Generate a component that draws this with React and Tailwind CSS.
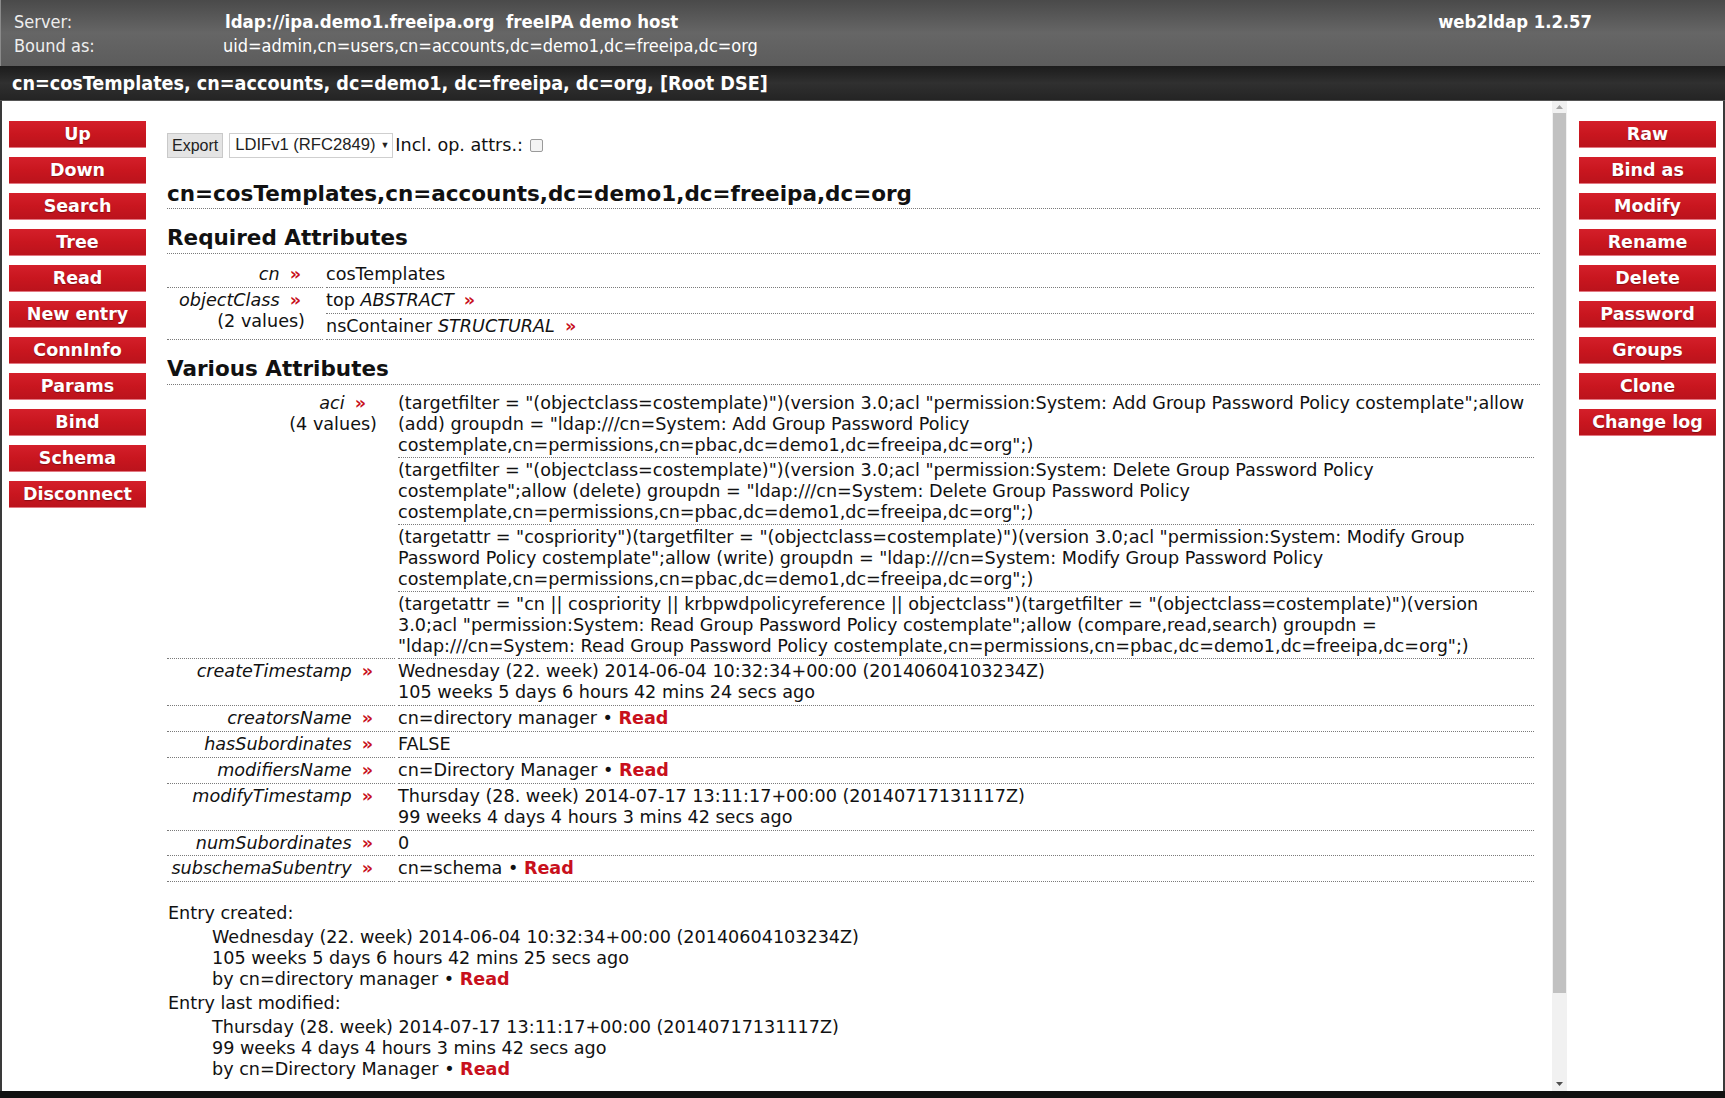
import React from "react";

const body = { fontFamily: '"DejaVu Sans", Verdana, sans-serif' };
const cond = { fontFamily: '"DejaVu Sans Condensed", "DejaVu Sans", sans-serif' };
const arial = { fontFamily: '"Liberation Sans", Arial, sans-serif' };

const leftNav = ["Up", "Down", "Search", "Tree", "Read", "New entry", "ConnInfo", "Params", "Bind", "Schema", "Disconnect"];
const rightNav = ["Raw", "Bind as", "Modify", "Rename", "Delete", "Password", "Groups", "Clone", "Change log"];

function NavButton({ label }) {
  return (
    <a className="block h-[27px] w-[137px] border-b border-[#e27882] bg-gradient-to-b from-[#d41f2a] via-[#c9161f] to-[#bb131c] text-center text-[17.5px] font-bold leading-[26px] text-white [text-shadow:0_1px_1px_rgba(0,0,0,0.3)]">
      {label}
    </a>
  );
}

function Arrow({ wide }) {
  return <span className={"ml-[10px] font-bold text-[#c8101c] " + (wide ? "mr-[11px]" : "mr-[4px]")}>»</span>;
}

function ValArrow() {
  return <span className="ml-[10px] font-bold text-[#c8101c]">»</span>;
}

function ReadLink() {
  return <span className="font-bold text-[#c8101c]">Read</span>;
}

const cellL = "border-b border-dotted border-[#7a7a7a] bg-white text-right align-top py-[2px] pr-[18px]";
const cellV = "border-b border-dotted border-[#7a7a7a] bg-white align-top py-[2px]";
const cellA = "border-b border-dotted border-[#7a7a7a] bg-white align-top pt-[2px] pb-[1.4px]";

const aciValues = [
  [
    '(targetfilter = "(objectclass=costemplate)")(version 3.0;acl "permission:System: Add Group Password Policy costemplate";allow',
    '(add) groupdn = "ldap:///cn=System: Add Group Password Policy',
    'costemplate,cn=permissions,cn=pbac,dc=demo1,dc=freeipa,dc=org";)',
  ],
  [
    '(targetfilter = "(objectclass=costemplate)")(version 3.0;acl "permission:System: Delete Group Password Policy',
    'costemplate";allow (delete) groupdn = "ldap:///cn=System: Delete Group Password Policy',
    'costemplate,cn=permissions,cn=pbac,dc=demo1,dc=freeipa,dc=org";)',
  ],
  [
    '(targetattr = "cospriority")(targetfilter = "(objectclass=costemplate)")(version 3.0;acl "permission:System: Modify Group',
    'Password Policy costemplate";allow (write) groupdn = "ldap:///cn=System: Modify Group Password Policy',
    'costemplate,cn=permissions,cn=pbac,dc=demo1,dc=freeipa,dc=org";)',
  ],
  [
    '(targetattr = "cn || cospriority || krbpwdpolicyreference || objectclass")(targetfilter = "(objectclass=costemplate)")(version',
    '3.0;acl "permission:System: Read Group Password Policy costemplate";allow (compare,read,search) groupdn =',
    '"ldap:///cn=System: Read Group Password Policy costemplate,cn=permissions,cn=pbac,dc=demo1,dc=freeipa,dc=org";)',
  ],
];

const various = [
  ["createTimestamp", ["Wednesday (22. week) 2014-06-04 10:32:34+00:00 (20140604103234Z)", "105 weeks 5 days 6 hours 42 mins 24 secs ago"]],
  ["creatorsName", [<>cn=directory manager • <ReadLink /></>]],
  ["hasSubordinates", ["FALSE"]],
  ["modifiersName", [<>cn=Directory Manager • <ReadLink /></>]],
  ["modifyTimestamp", ["Thursday (28. week) 2014-07-17 13:11:17+00:00 (20140717131117Z)", "99 weeks 4 days 4 hours 3 mins 42 secs ago"]],
  ["numSubordinates", ["0"]],
  ["subschemaSubentry", [<>cn=schema • <ReadLink /></>]],
];

export default function App() {
  return (
    <div className="flex h-[1098px] w-[1725px] flex-col overflow-hidden bg-white text-[17.6px] leading-[20.9px] text-[#111]" style={body}>
      {/* top header */}
      <div className="flex h-[66px] shrink-0 items-start justify-between border-l border-[#8a8a8a] bg-gradient-to-b from-[#4a4a4a] via-[#666] to-[#5c5c5c] text-white" style={cond}>
        <div className="grid grid-cols-[209px_auto] content-start pl-[13px] pt-[10px] text-[18px] leading-[24px]">
          <div className="text-[#eee]">Server:</div>
          <div className="pl-[2px] text-[18.5px] font-bold">ldap://ipa.demo1.freeipa.org&nbsp; freeIPA demo host</div>
          <div className="text-[#eee]">Bound as:</div>
          <div>uid=admin,cn=users,cn=accounts,dc=demo1,dc=freeipa,dc=org</div>
        </div>
        <div className="pr-[133px] pt-[10px] text-[18.3px] font-bold leading-[24px]">web2ldap 1.2.57</div>
      </div>
      {/* dn bar */}
      <div className="flex h-[35px] shrink-0 items-center border-b border-[#555] bg-gradient-to-b from-[#1c1c1c] via-[#303030] to-[#242424] pl-[12px] pt-[2px] text-[19.6px] font-bold text-white" style={cond}>
        cn=cosTemplates, cn=accounts, dc=demo1, dc=freeipa, dc=org, [Root DSE]
      </div>
      {/* body */}
      <div className="flex min-h-0 flex-1 border-x-2 border-[#3a3a3a]">
        <div className="flex w-[146px] shrink-0 flex-col gap-[9px] pl-[7px] pt-[20px]">
          {leftNav.map((l) => (
            <NavButton key={l} label={l} />
          ))}
        </div>
        <div className="min-w-0 flex-1 overflow-hidden pl-[19px] pr-[12px] pt-[32px]">
          <div className="flex items-center">
            <button className="h-[25px] border border-[#c9c9c9] bg-[#e4e4e4] px-[4px] text-[16px] leading-[23px] text-[#222]" style={arial}>
              Export
            </button>
            <div className="ml-[6px] flex h-[25px] items-center border border-[#cfcfcf] bg-white pl-[5px] pr-[3px] text-[16.6px] text-[#222]" style={arial}>
              LDIFv1 (RFC2849)<span className="ml-[5px] text-[9px]">▼</span>
            </div>
            <span className="ml-[2px]">Incl. op. attrs.:</span>
            <span className="ml-[7px] inline-block h-[13px] w-[13px] rounded-[2px] border border-[#9a9a9a] bg-[#f3f3f3]"></span>
          </div>

          <h1 className="mt-[23px] border-b border-dotted border-[#7a7a7a] pb-[2px] text-[21.5px] font-bold leading-[25px]">
            cn=cosTemplates,cn=accounts,dc=demo1,dc=freeipa,dc=org
          </h1>

          <h2 className="mt-[16px] border-b border-dotted border-[#7a7a7a] pb-[3px] text-[21.5px] font-bold leading-[25px]">
            Required Attributes
          </h2>
          <table className="mt-[8px] w-full border-separate border-spacing-x-[3px] border-spacing-y-0 -mx-[3px]">
            <tbody>
              <tr>
                <td className={cellL + " w-[156px]"}>
                  <i>cn</i>
                  <Arrow />
                </td>
                <td className={cellV}>cosTemplates</td>
              </tr>
              <tr>
                <td className={cellL} rowSpan={2}>
                  <i>objectClass</i>
                  <Arrow />
                  <div>(2 values)</div>
                </td>
                <td className={cellV}>
                  top <i>ABSTRACT</i>
                  <ValArrow />
                </td>
              </tr>
              <tr>
                <td className={cellV}>
                  nsContainer <i>STRUCTURAL</i>
                  <ValArrow />
                </td>
              </tr>
            </tbody>
          </table>

          <h2 className="mt-[16px] border-b border-dotted border-[#7a7a7a] pb-[3px] text-[21.5px] font-bold leading-[25px]">
            Various Attributes
          </h2>
          <table className="mt-[6px] w-full border-separate border-spacing-x-[3px] border-spacing-y-0 -mx-[3px]">
            <tbody>
              {aciValues.map((v, i) => (
                <tr key={i}>
                  {i === 0 && (
                    <td className={cellL + " w-[228px]"} rowSpan={4}>
                      <i>aci</i>
                      <Arrow wide />
                      <div>(4 values)</div>
                    </td>
                  )}
                  <td className={cellA}>
                    {v.map((line, j) => (
                      <div key={j} className="whitespace-nowrap">
                        {line}
                      </div>
                    ))}
                  </td>
                </tr>
              ))}
              {various.map(([name, lines]) => (
                <tr key={name}>
                  <td className={cellL}>
                    <i>{name}</i>
                    <Arrow />
                  </td>
                  <td className={cellV}>
                    {lines.map((line, j) => (
                      <div key={j}>{line}</div>
                    ))}
                  </td>
                </tr>
              ))}
            </tbody>
          </table>

          <div className="mt-[21px] pl-[1px]">
            <div>Entry created:</div>
            <div className="my-[3px] pl-[44px]">
              <div>Wednesday (22. week) 2014-06-04 10:32:34+00:00 (20140604103234Z)</div>
              <div>105 weeks 5 days 6 hours 42 mins 25 secs ago</div>
              <div>
                by cn=directory manager • <ReadLink />
              </div>
            </div>
            <div>Entry last modified:</div>
            <div className="my-[3px] pl-[44px]">
              <div>Thursday (28. week) 2014-07-17 13:11:17+00:00 (20140717131117Z)</div>
              <div>99 weeks 4 days 4 hours 3 mins 42 secs ago</div>
              <div>
                by cn=Directory Manager • <ReadLink />
              </div>
            </div>
          </div>
        </div>
        {/* scrollbar */}
        <div className="flex w-[15px] shrink-0 flex-col items-center bg-[#f1f1f1]">
          <div className="flex h-[12px] w-full items-center justify-center">
            <svg width="7" height="4" viewBox="0 0 7 4"><path d="M3.5 0L7 4H0z" fill="#a3a3a3" /></svg>
          </div>
          <div className="h-[880px] w-[13px] bg-[#c1c1c1]"></div>
          <div className="flex-1"></div>
          <div className="flex h-[14px] w-full items-center justify-center">
            <svg width="7" height="4" viewBox="0 0 7 4"><path d="M0 0H7L3.5 4z" fill="#505050" /></svg>
          </div>
        </div>
        <div className="flex w-[156px] shrink-0 flex-col gap-[9px] pl-[12px] pt-[20px]">
          {rightNav.map((l) => (
            <NavButton key={l} label={l} />
          ))}
        </div>
      </div>
      <div className="h-[7px] shrink-0 bg-[#111]"></div>
    </div>
  );
}
